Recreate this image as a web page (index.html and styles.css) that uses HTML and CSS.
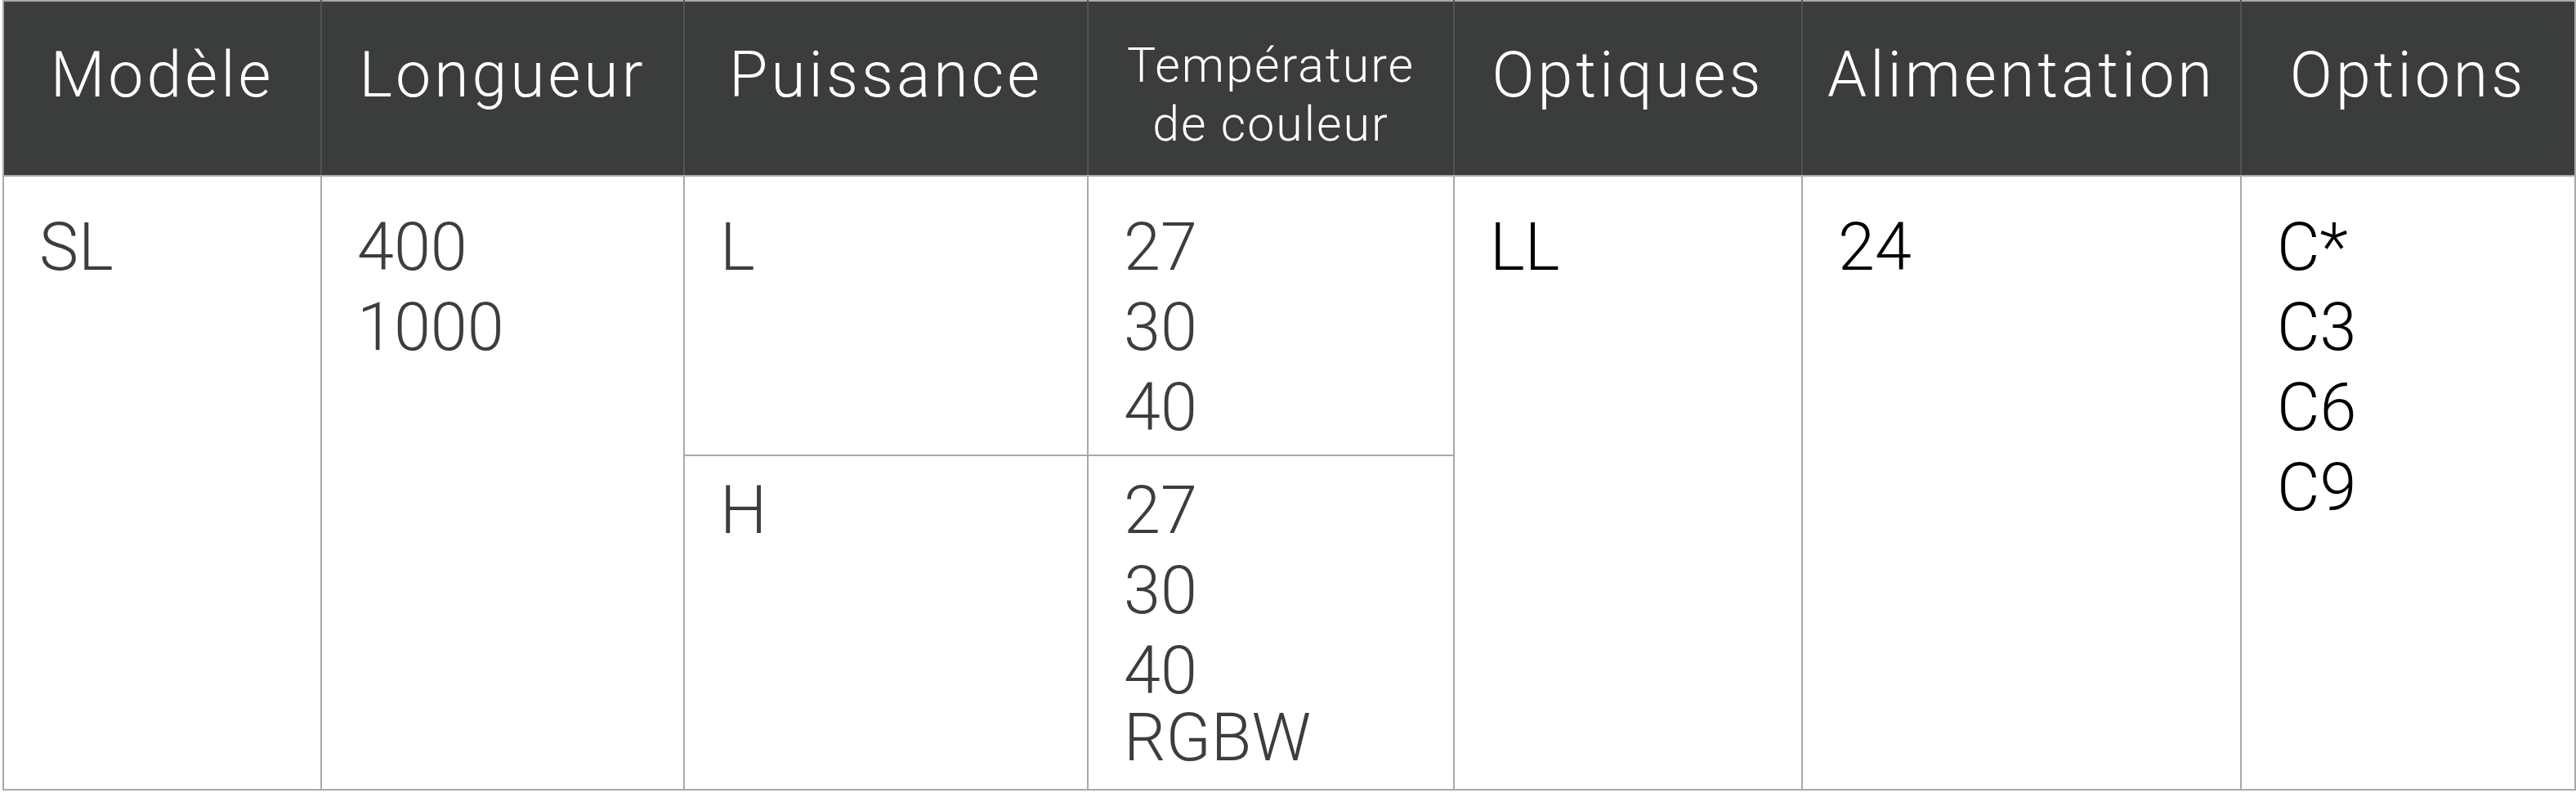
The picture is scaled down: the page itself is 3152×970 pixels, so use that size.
FILE: index.html
```html
<!DOCTYPE html>
<html lang="fr">
<head>
<meta charset="utf-8">
<title>Tableau</title>
<link rel="stylesheet" href="styles.css">
</head>
<body>
<table class="spec">
  <colgroup>
    <col class="c1"><col class="c2"><col class="c3"><col class="c4"><col class="c5"><col class="c6"><col class="c7">
  </colgroup>
  <thead>
    <tr class="head">
      <th>Modèle</th>
      <th>Longueur</th>
      <th>Puissance</th>
      <th class="small">Température<br>de couleur</th>
      <th>Optiques</th>
      <th>Alimentation</th>
      <th>Options</th>
    </tr>
  </thead>
  <tbody>
    <tr class="r1">
      <td rowspan="2" class="top">SL</td>
      <td rowspan="2" class="top"><span class="v">400</span><span class="v">1000</span></td>
      <td class="top">L</td>
      <td class="top"><span class="v">27</span><span class="v">30</span><span class="v">40</span></td>
      <td rowspan="2" class="top dark">LL</td>
      <td rowspan="2" class="top dark">24</td>
      <td rowspan="2" class="top dark"><span class="v">C*</span><span class="v">C3</span><span class="v">C6</span><span class="v">C9</span></td>
    </tr>
    <tr class="r2">
      <td class="sub">H</td>
      <td class="sub"><span class="v">27</span><span class="v">30</span><span class="v">40</span><span class="v tight">RGBW</span></td>
    </tr>
  </tbody>
</table>
</body>
</html>
```
FILE: styles.css
```css
html, body {
  margin: 0;
  padding: 0;
  background: #ffffff;
}

.spec {
  margin: 0 0 0 3px;
  width: 3147px;
  table-layout: fixed;
  border-collapse: collapse;
  font-family: Roboto, "Liberation Sans", sans-serif;
  font-weight: 300;
}

.c1 { width: 389px; }
.c2 { width: 444px; }
.c3 { width: 494px; }
.c4 { width: 448px; }
.c5 { width: 426px; }
.c6 { width: 537px; }
.c7 { width: 409px; }

.head {
  height: 214px;
}

.head th {
  background: #3b3d3c;
  color: #ffffff;
  font-weight: 300;
  font-size: 77px;
  line-height: 92px;
  letter-spacing: 4px;
  text-align: center;
  vertical-align: top;
  padding: 44px 0 0 0;
  border-top: 2px solid #a8a8a8;
  border-bottom: 2px solid #a8a8a8;
  border-left: 2px solid #535554;
  border-right: 2px solid #535554;
  white-space: nowrap;
}

.head th:first-child { border-left-color: #a8a8a8; }
.head th:last-child { border-right-color: #a8a8a8; }

.head th.small {
  font-size: 59px;
  line-height: 72px;
  letter-spacing: 2px;
  padding-top: 42px;
}

.spec td {
  border: 2px solid #a9a9a9;
  vertical-align: top;
  text-align: left;
  color: #3c3d3c;
  font-size: 81px;
  line-height: 98px;
  padding: 0 0 0 43px;
}

.r1 { height: 342px; }
.r2 { height: 409px; }

.spec td.top { padding-top: 38px; }
.spec td.sub { padding-top: 18px; }
.spec td.dark { color: #000000; }

.v { display: block; }
.v.tight { line-height: 66px; }
```
